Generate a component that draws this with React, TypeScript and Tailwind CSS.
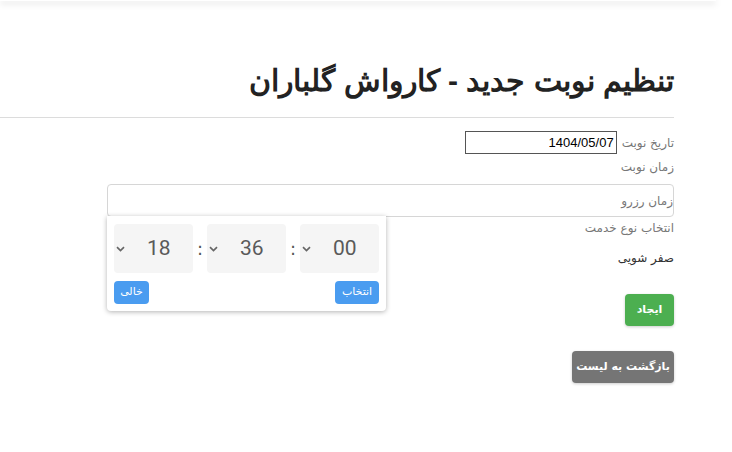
import React from "react";

const Chevron = () => (
  <svg width="9" height="6" viewBox="0 0 9 6" className="text-[#666]">
    <path d="M1 1.2l3.5 3.3L8 1.2" fill="none" stroke="currentColor" strokeWidth="1.7" />
  </svg>
);

const TimeBox = ({ v }: { v: string }) => (
  <div className="flex h-[49px] w-[79px] items-center rounded bg-[#f5f5f5] pl-[2px]">
    <Chevron />
    <span className="ml-[22px] text-[21px] text-[#5a5a5a]" style={{ fontFamily: "Roboto, sans-serif" }}>{v}</span>
  </div>
);

export default function App() {
  return (
    <div className="min-h-[452px] w-[732px] bg-white" style={{ fontFamily: "'DejaVu Sans', 'Liberation Sans', sans-serif" }}>
      <div className="h-px w-[716px] shadow-[0_2px_6px_rgba(0,0,0,0.35)]" />
      <div dir="rtl" className="w-[674px]">
        <h1
          className="mt-[58px] text-[30px] font-bold leading-[44px] text-[#222]"
          style={{ fontFamily: "'Liberation Sans', Arial, sans-serif" }}
        >
          تنظیم نوبت جدید - کارواش گلباران
        </h1>
        <div className="mt-[14px] h-px w-full bg-[#dcdcdc]" />
        <div className="mt-[13px] flex items-center gap-[5px]">
          <span className="text-[12px] text-[#777]">تاریخ نوبت</span>
          <div
            dir="ltr"
            className="flex h-[23px] w-[152px] items-center justify-end border border-[#555] pr-[2px] text-[13px] text-black"
            style={{ fontFamily: "'Liberation Sans', Arial, sans-serif" }}
          >
            1404/05/07
          </div>
        </div>
        <div className="mt-[4px] text-[12px] leading-[18px] text-[#777]">زمان نوبت</div>
        <div className="relative mt-[8px] w-[567px]">
          <div className="flex h-[33px] w-[567px] items-center rounded border border-[#d6d6d6] text-[12px] text-[#777]">
            زمان رزرو
          </div>
          <div
            dir="ltr"
            className="absolute left-0 top-[32px] z-10 w-[279px] rounded-b bg-white px-[7px] pb-[7px] pt-[8px] shadow-[0_1px_5px_rgba(0,0,0,0.3)]"
          >
            <div className="flex items-center justify-between">
              <TimeBox v="18" />
              <span className="text-[18px] text-[#555]">:</span>
              <TimeBox v="36" />
              <span className="text-[18px] text-[#555]">:</span>
              <TimeBox v="00" />
            </div>
            <div className="mt-[8px] flex justify-between">
              <div className="flex h-[23px] w-[35px] items-center justify-center rounded bg-[#4a9cf0] text-[11px] text-white">خالی</div>
              <div className="flex h-[23px] w-[44px] items-center justify-center rounded bg-[#4a9cf0] text-[11px] text-white">انتخاب</div>
            </div>
          </div>
        </div>
        <div className="mt-[2px] text-[12px] leading-[18px] text-[#777]">انتخاب نوع خدمت</div>
        <div className="mt-[12px] text-[12px] leading-[18px] text-[#333]">صفر شویی</div>
        <div className="mt-[27px] flex">
          <div className="flex h-[32px] w-[49px] items-center justify-center rounded bg-[#4caf50] text-[11px] font-bold text-white shadow-[0_1px_3px_rgba(0,0,0,0.2)]">ایجاد</div>
        </div>
        <div className="mt-[25px] flex">
          <div className="flex h-[32px] w-[102px] items-center justify-center whitespace-nowrap rounded bg-[#757575] text-[11px] font-bold text-white shadow-[0_1px_3px_rgba(0,0,0,0.2)]">بازگشت به لیست</div>
        </div>
      </div>
    </div>
  );
}
